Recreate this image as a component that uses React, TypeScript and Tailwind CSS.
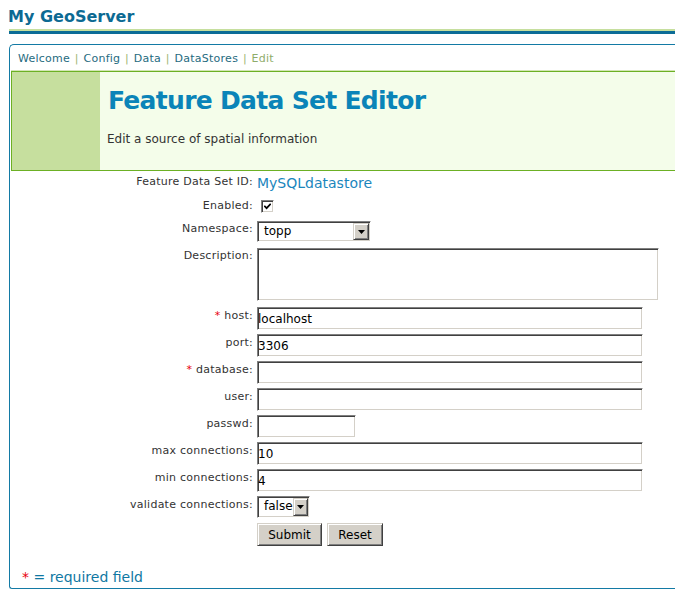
import type { FC, ReactNode } from 'react';
import { clsx } from 'clsx';

// classic windows bevels
const INSET =
  'border border-t-[#808080] border-l-[#808080] border-r-white border-b-white bg-white shadow-[inset_1px_1px_0_#404040,inset_-1px_-1px_0_#d4d0c8]';
const OUTSET =
  'border border-t-[#d4d0c8] border-l-[#d4d0c8] border-r-[#404040] border-b-[#404040] bg-[#d4d0c8] shadow-[inset_1px_1px_0_#ffffff,inset_-1px_-1px_0_#808080]';

const CRUMBS = ['Welcome', 'Config', 'Data', 'DataStores'];

const Req = () => <span className="text-[#e8000b]">{'* '}</span>;

const FormRow: FC<{
  label: ReactNode;
  className?: string;
  labelClassName?: string;
  children: ReactNode;
}> = ({ label, className, labelClassName, children }) => (
  <div className={clsx('flex items-start gap-[4px]', className)}>
    <div
      className={clsx(
        'w-[243px] shrink-0 text-right text-[11px] leading-[13px] tracking-[0.25px] text-[#333333]',
        labelClassName,
      )}
    >
      {label}
    </div>
    {children}
  </div>
);

const TextField: FC<{ value?: string; short?: boolean }> = ({
  value = '',
  short,
}) => (
  <input
    type="text"
    readOnly
    defaultValue={value}
    className={clsx(
      INSET,
      'h-[23px] px-0 pt-[1px] text-[12px] text-black outline-none',
      short ? 'w-[99px]' : 'w-[386px]',
    )}
  />
);

const Select: FC<{ value: string; className?: string }> = ({
  value,
  className,
}) => (
  <div className={clsx(INSET, 'flex items-stretch p-[1px]', className)}>
    <span className="flex-1 pl-[5px] text-[12px] leading-[17px] text-black">
      {value}
    </span>
    <span className={clsx(OUTSET, 'flex w-[16px] items-center justify-center')}>
      <svg width="7" height="4" viewBox="0 0 7 4">
        <path d="M0 0h7L3.5 4z" fill="#000" />
      </svg>
    </span>
  </div>
);

export default function App() {
  return (
    <div className="h-[603px] w-[675px] overflow-hidden bg-white font-['DejaVu_Sans',sans-serif]">
      <h1 className="pl-[8px] pt-[7px] text-[16px] font-bold leading-[19px] text-[#0c6a93]">
        My GeoServer
      </h1>
      <div className="ml-[9px] mt-[3px]">
        <div className="h-[2px] bg-[#c6df9e]" />
        <div className="h-[3px] bg-[#0c6c96]" />
      </div>

      <div className="ml-[9px] mt-[10px] rounded-bl-[3px] rounded-tl-[5px] border-b border-l border-t border-[#137aa5]">
        <nav className="pl-[8px] pt-[7px] text-[11px] leading-[13px] tracking-[0.25px] text-[#1f6b80]">
          {CRUMBS.map(c => (
            <span key={c}>
              {c}{' '}
              <span className="mx-[1px] text-[#a1b673]">|</span>{' '}
            </span>
          ))}
          <span className="text-[#8fac6a]">Edit</span>
        </nav>

        <div className="ml-[1px] mt-[5px] h-px bg-[#d3e5b5]" />
        <div className="ml-[1px] flex h-[100px] border-b border-l border-t border-[#6cb024]">
          <div className="w-[88px] shrink-0 bg-[#c6df9e]" />
          <div className="flex-1 bg-[#f4fdea] pl-[7px] pt-[14px]">
            <h2 className="ml-[1px] text-[25px] font-bold leading-[30px] tracking-[-0.7px] text-[#0a84b8]">
              Feature Data Set Editor
            </h2>
            <p className="mt-[16px] text-[12px] leading-[14px] text-[#333333]">
              Edit a source of spatial information
            </p>
          </div>
        </div>

        <div className="flex flex-col">
          <FormRow label="Feature Data Set ID:" className="mt-[4px] items-baseline">
            <span className="text-[14px] leading-[17px] text-[#1a86bd]">
              MySQLdatastore
            </span>
          </FormRow>
          <FormRow label="Enabled:" className="mt-[8px]" labelClassName="-mt-px">
            <span className={clsx(INSET, 'ml-[4px] flex size-[13px] items-center justify-center')}>
              <svg width="7" height="7" viewBox="0 0 7 7">
                <path d="M0.3 2.8 2.6 5.2 6.7 0.8" stroke="#000" strokeWidth="1.7" fill="none" />
              </svg>
            </span>
          </FormRow>
          <FormRow label="Namespace:" className="mt-[8px]" labelClassName="pt-[1px]">
            <Select value="topp" className="h-[21px] w-[114px]" />
          </FormRow>
          <FormRow label="Description:" className="mt-[6px]" labelClassName="pt-[1px]">
            <div className={clsx(INSET, 'h-[53px] w-[402px]')} />
          </FormRow>
          <div className="mt-[6px] flex flex-col gap-[4px]">
            <FormRow label={<><Req />host:</>} labelClassName="pt-[2px]">
              <TextField value="localhost" />
            </FormRow>
            <FormRow label="port:" labelClassName="pt-[2px]">
              <TextField value="3306" />
            </FormRow>
            <FormRow label={<><Req />database:</>} labelClassName="pt-[2px]">
              <TextField />
            </FormRow>
            <FormRow label="user:" labelClassName="pt-[2px]">
              <TextField />
            </FormRow>
            <FormRow label="passwd:" labelClassName="pt-[2px]">
              <TextField short />
            </FormRow>
            <FormRow label="max connections:" labelClassName="pt-[2px]">
              <TextField value="10" />
            </FormRow>
            <FormRow label="min connections:" labelClassName="pt-[2px]">
              <TextField value="4" />
            </FormRow>
            <FormRow label="validate connections:" labelClassName="pt-[2px]">
              <Select value="false" className="h-[22px] w-[53px]" />
            </FormRow>
          </div>
          <div className="ml-[247px] mt-[5px] flex gap-[5px]">
            <button type="button" className={clsx(OUTSET, 'h-[23px] w-[65px] text-[12px] text-black')}>
              Submit
            </button>
            <button type="button" className={clsx(OUTSET, 'h-[23px] w-[56px] text-[12px] text-black')}>
              Reset
            </button>
          </div>
        </div>

        <p className="mt-[23px] pb-[2px] pl-[12px] text-[14px] leading-[17px] text-[#0f78a3]">
          <span className="text-[#e8000b]">*</span>
          {' = required field'}
        </p>
      </div>
    </div>
  );
}
